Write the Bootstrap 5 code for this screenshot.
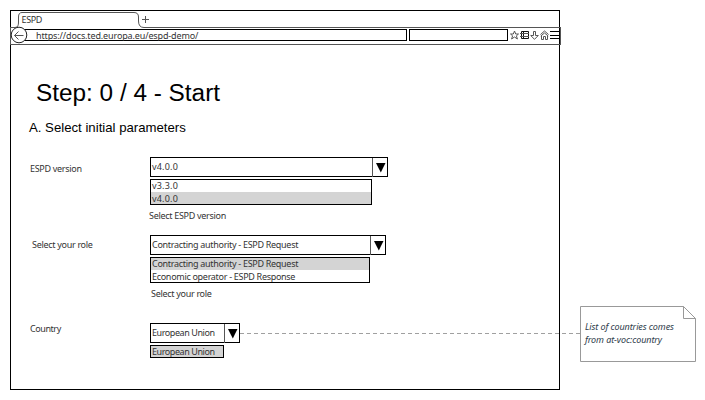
<!DOCTYPE html>
<html lang="en">
<head>
<meta charset="utf-8">
<meta name="viewport" content="width=device-width, initial-scale=1">
<title>ESPD</title>
<link href="https://cdn.jsdelivr.net/npm/bootstrap@5.3.0/dist/css/bootstrap.min.css" rel="stylesheet">
<style>
body{width:705px;height:400px;overflow:hidden;padding:10px;background:#fff;color:#333;font:9px/13px "Noto Sans","Open Sans",sans-serif;letter-spacing:-.3px}
svg{display:block;flex:none;overflow:visible}
.window{width:550px;height:380px;border:1px solid #000;flex:none}
.tabstrip{height:16px}
.tab-name{padding-left:10.5px;letter-spacing:-.35px;width:128px;line-height:18px}
.tab-lines{left:-1px;top:0}
.toolbar{height:18px;width:551px;margin-left:-1px;border:1px solid #555;border-top:0}
.back{margin-left:-1px;margin-top:-1px;z-index:1}
.box{border:1px solid #000;background:#fff;height:12px;margin-top:2px}
.address{width:391px;margin-left:-10px;padding-left:17px;line-height:12px;letter-spacing:-.13px}
.search{width:99px;margin-left:2px}
.tools{margin:3px 0 0 2px;gap:1px}
h1,h2{font-family:"Liberation Sans",Arial,sans-serif;font-weight:400;color:#000;letter-spacing:0;margin:0}
h1{font-size:24.35px;line-height:28px;padding:34px 0 0 25px}
h2{font-size:13.2px;line-height:16px;padding:13px 0 0 18px}
.field{padding-left:19px}
.field-name{width:120px;flex:none;padding-top:5px}
.role-name{padding:3px 0 0 2px}
.version{margin-top:21px;height:78px}
.country{margin-top:23px}
.country .field-name{padding:0;margin-top:-1px}
.picker{border:1px solid #000;height:20px;line-height:18px}
.picker span,.options li{padding-left:1px}
.pick-version{width:238px}
.pick-role{width:236px}
.pick-country{width:90px}
.arrow{width:15px;height:19px;border-left:1px solid #555;padding:5px 0 0 3px}
.options{border:1px solid #000;margin:2px 0 0;padding:0;list-style:none;line-height:12px}
.options li{height:12px}
.options li+li{line-height:14px}
.options .on{background:#d4d4d4}
.list-version{width:222px}
.list-role{width:220px}
.list-country{width:74px}
.list-country li{height:11px}
.help-version{margin:4px 0 0 -1px}
.help-role{margin:4px 0 0 1px}
.v{letter-spacing:.2px}
.union{letter-spacing:-.43px}
.link-line{width:340px;height:1px;margin-top:323px;margin-left:-320px;z-index:1;flex:none;background:repeating-linear-gradient(90deg,#a0a0a0 0 4px,transparent 4px 7px)}
.note{width:116px;height:56px;margin-top:296px;padding:14px 0 0 5px;font-style:italic;letter-spacing:-.08px;color:#2d3b4a}
.note svg{left:0;top:0}
</style>
<script src="https://cdn.jsdelivr.net/npm/bootstrap@5.3.0/dist/js/bootstrap.bundle.min.js" defer></script>
</head>
<body>
<div class="d-flex align-items-start">
<main class="window">
  <div class="tabstrip d-flex position-relative">
    <svg class="tab-lines position-absolute" width="551" height="17" fill="none" stroke="#555"><path d="M0 16.500H5C8 16.500 8.500 14 8.500 11V6Q8.500 1.500 12 1.500H124Q128.500 1.500 128.500 6V10Q128.500 16.500 134 16.500H550.500V18M132 8.500h7M135.500 5v7"/></svg>
    <span class="tab-name">ESPD</span>
  </div>
  <div class="toolbar d-flex align-items-start">
    <svg class="back position-relative" width="18" height="18"><circle cx="9" cy="9" r="7.800" fill="#fff" stroke="#222"/><path d="M4.500 9.500h9M8.500 5.500l-4 4 4 4" fill="none" stroke="#555"/></svg>
    <div class="box address">https://docs.ted.europa.eu/espd-demo/</div>
    <div class="box search"></div>
    <div class="tools d-flex">
      <svg width="9" height="10" fill="none" stroke="#555"><path d="M4.500 1l1.200 3H8.500L6.400 5.800 7.400 9 4.500 7 1.600 9 2.600 5.800.5 4h2.800z"/></svg>
      <svg width="9" height="10" fill="none" stroke="#111"><path d="M1.500 1.500h7v7h-7zM3.500 1.500v7"/><path d="M0 3.500h9M0 6.500h9" stroke="#555"/></svg>
      <svg width="9" height="10" fill="none" stroke="#555"><path d="M3.500 1.500h2v4H8.300L4.500 9.300.7 5.500h2.800z"/></svg>
      <svg width="9" height="10" fill="none" stroke="#555"><path d="M.5 4.500L4.500 1 8.500 4.500M.8 6L4.500 3 8.200 6M1.500 6v3.500h2V6.500h2v3h2V6"/></svg>
      <svg width="10" height="10" stroke="#000"><path d="M0 1.500h9M0 5.500h9M0 8.500h9"/></svg>
    </div>
  </div>

  <h1>Step: 0 / 4 - Start</h1>
  <h2>A. Select initial parameters</h2>

  <div class="field version d-flex">
    <label class="field-name">ESPD version</label>
    <div>
      <div class="picker pick-version d-flex justify-content-between"><span class="v">v4.0.0</span><div class="arrow"><svg width="10" height="10"><path d="M0 0h9.500L4.800 9.500z"/></svg></div></div>
      <ul class="options list-version v"><li>v3.3.0</li><li class="on">v4.0.0</li></ul>
      <div class="help-version">Select ESPD version</div>
    </div>
  </div>
  <div class="field d-flex">
    <label class="field-name role-name">Select your role</label>
    <div>
      <div class="picker pick-role d-flex justify-content-between"><span>Contracting authority - ESPD Request</span><div class="arrow"><svg width="10" height="10"><path d="M0 0h9.500L4.800 9.500z"/></svg></div></div>
      <ul class="options list-role"><li class="on">Contracting authority - ESPD Request</li><li>Economic operator - ESPD Response</li></ul>
      <div class="help-role">Select your role</div>
    </div>
  </div>
  <div class="field country d-flex">
    <label class="field-name union">Country</label>
    <div class="union">
      <div class="picker pick-country d-flex justify-content-between"><span>European Union</span><div class="arrow"><svg width="10" height="10"><path d="M0 0h9.500L4.800 9.500z"/></svg></div></div>
      <ul class="options list-country"><li class="on">European Union</li></ul>
    </div>
  </div>
</main>
<div class="link-line"></div>
<aside class="note position-relative">
  <svg class="position-absolute" width="116" height="56" fill="none" stroke="#999"><path d="M.5.5H103.500L115.500 12.500V55.500H.5zM103.500.5V12.500H115.500"/></svg>
  List of countries comes<br>from at-voc:country
</aside>
</div>
</body>
</html>
